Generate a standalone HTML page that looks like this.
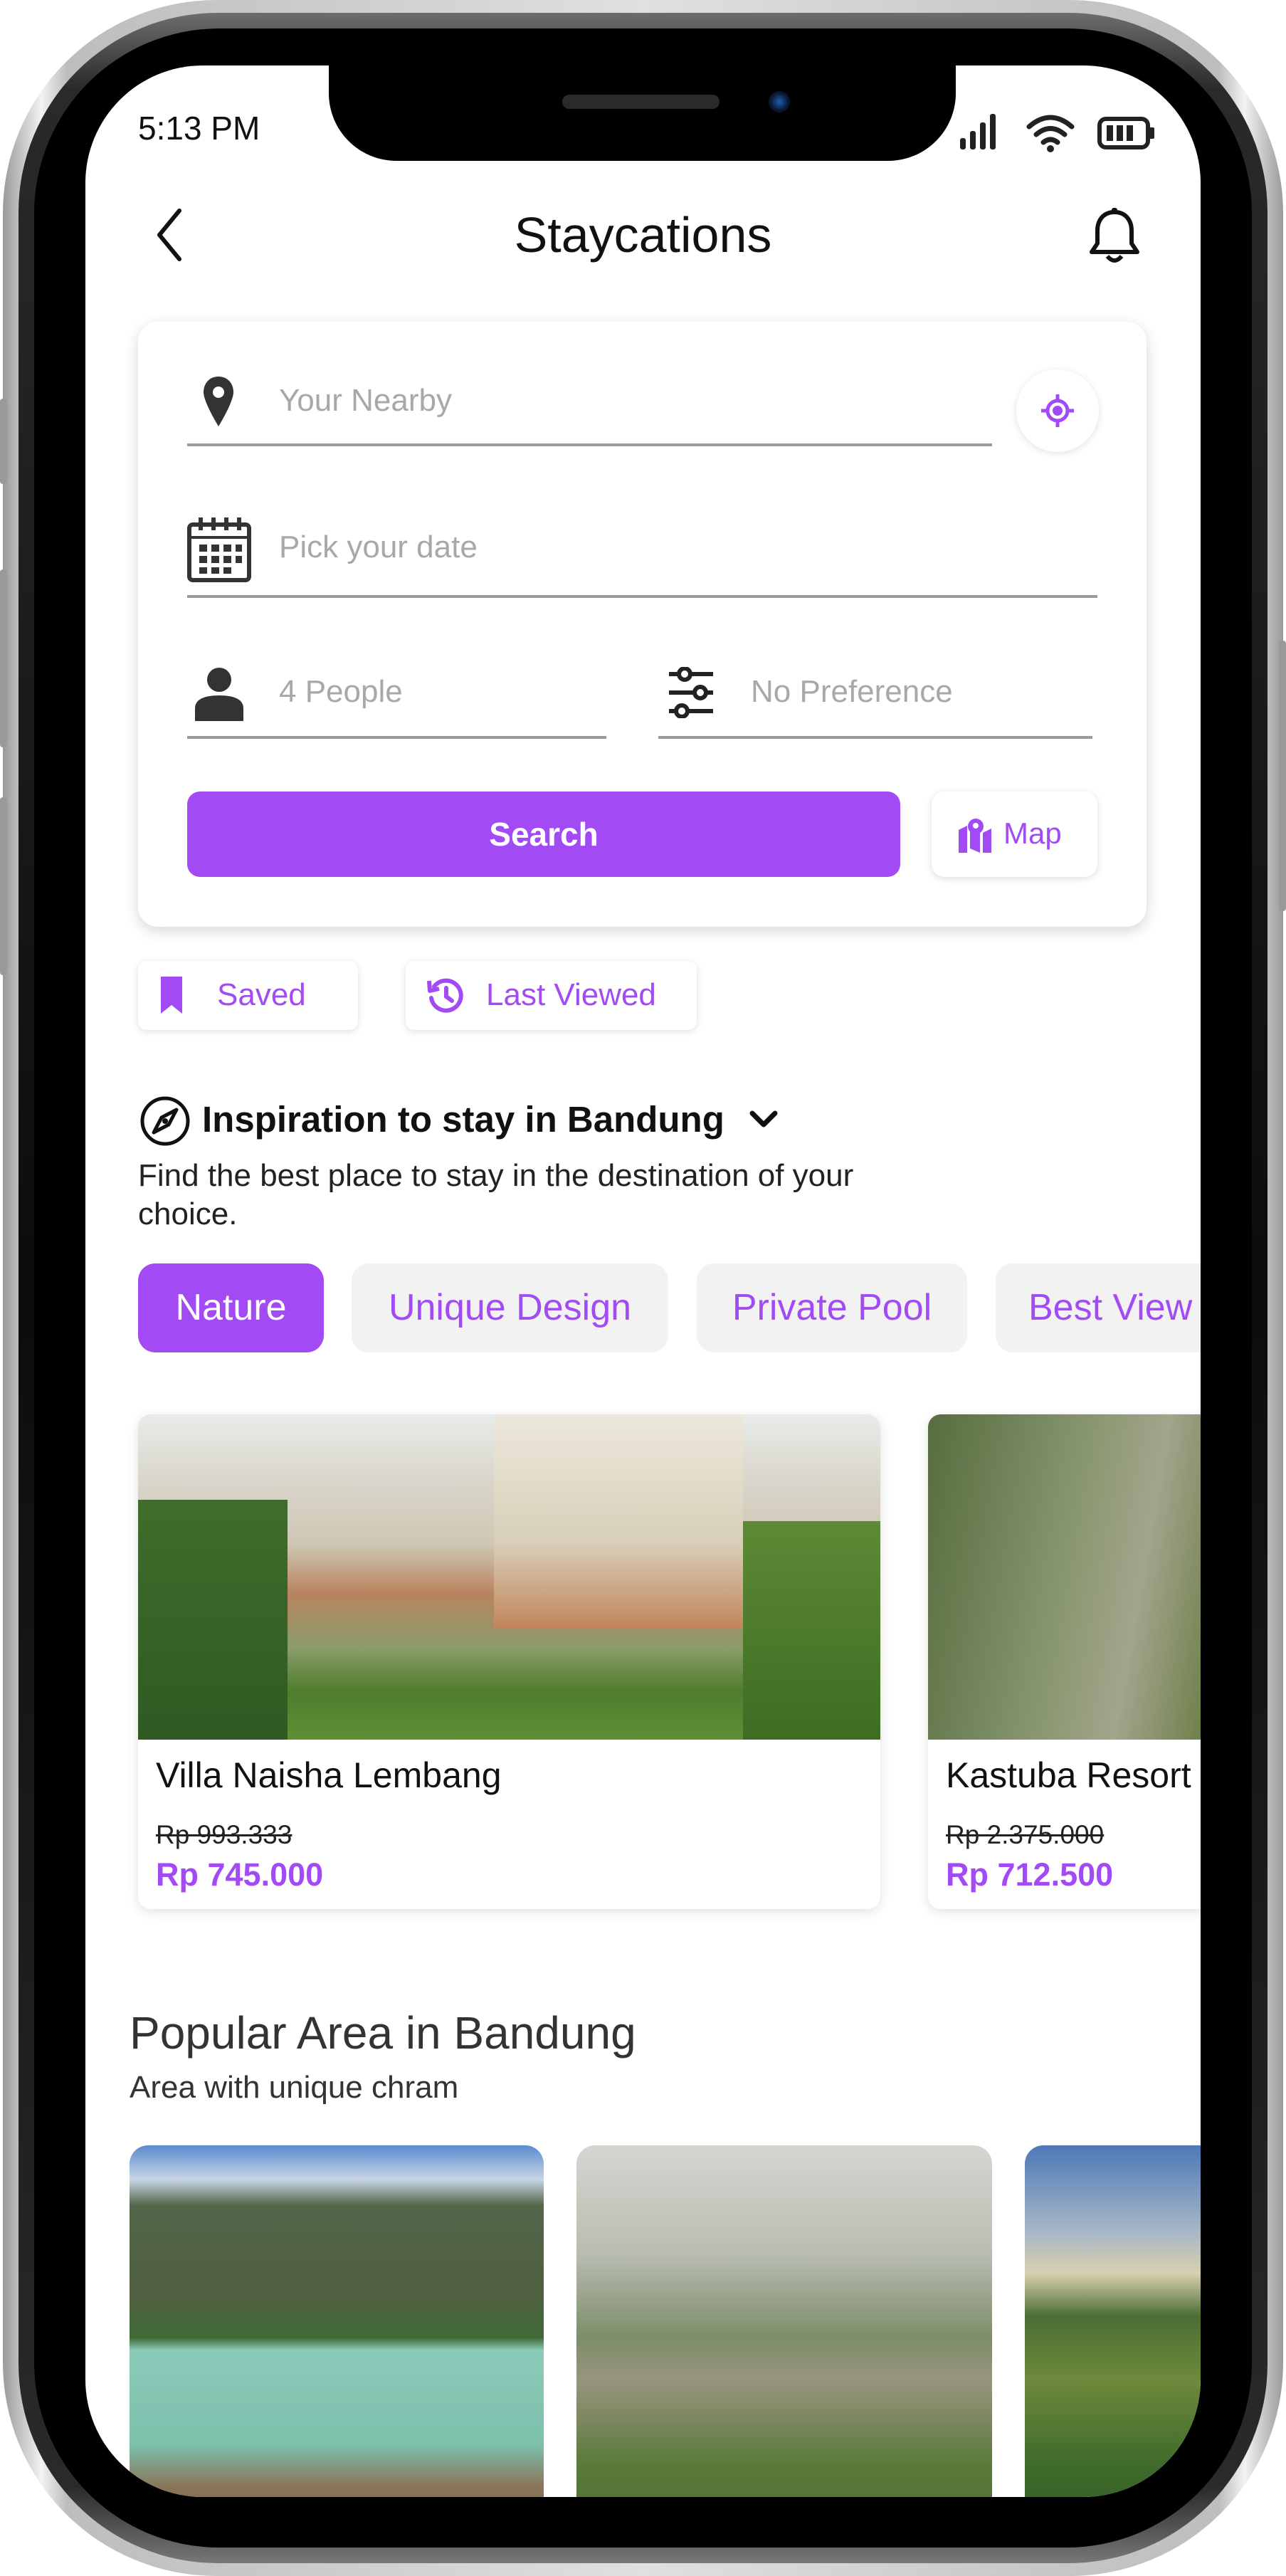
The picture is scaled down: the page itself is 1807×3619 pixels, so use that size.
<!DOCTYPE html>
<html><head><meta charset="utf-8"><style>
*{margin:0;padding:0;box-sizing:border-box}
body{width:1807px;height:3619px;overflow:hidden;background:#fff;font-family:"Liberation Sans",sans-serif;position:relative}
.a{position:absolute}
.t{position:absolute;white-space:nowrap}
.ph{color:#a8a8a8;font-size:44px;line-height:60px}
.line{position:absolute;height:4px;background:#9a9a9a}
.tab{position:absolute;top:1775px;height:125px;border-radius:24px;background:#f2f2f2;color:#a24bf4;font-size:52px;line-height:125px;text-align:center}
</style></head><body>
<div class="a" style="left:4px;top:0;width:1799px;height:3619px;border-radius:300px;background:linear-gradient(90deg,#9a9a9a,#f2f2f2 3%,#bdbdbd 5%,#e0e0e0 50%,#bdbdbd 95%,#f2f2f2 97%,#9a9a9a)"></div>
<div class="a" style="left:26px;top:18px;width:1755px;height:3583px;border-radius:280px;background:linear-gradient(180deg,#6d6d6d,#2a2a2a 3%,#0c0c0c 50%,#2a2a2a 97%,#777)"></div>
<div class="a" style="left:48px;top:40px;width:1711px;height:3539px;border-radius:260px;background:#000"></div>
<div class="a" style="left:0;top:560px;width:10px;height:120px;background:#999;border-radius:4px"></div>
<div class="a" style="left:0;top:800px;width:10px;height:250px;background:#999;border-radius:4px"></div>
<div class="a" style="left:0;top:1120px;width:10px;height:250px;background:#999;border-radius:4px"></div>
<div class="a" style="right:0;top:900px;width:10px;height:380px;background:#999;border-radius:4px"></div>
<div class="a" style="left:120px;top:92px;width:1567px;height:3416px;border-radius:165px;background:#fff;overflow:hidden">
 <div class="a" style="left:-120px;top:-92px;width:1807px;height:3619px">
  <div class="a" style="left:462px;top:60px;width:881px;height:166px;background:#000;border-radius:0 0 95px 95px"></div>
  <div class="a" style="left:790px;top:133px;width:221px;height:20px;border-radius:10px;background:#2a2a2a"></div>
  <div class="a" style="left:1080px;top:128px;width:30px;height:30px;border-radius:50%;background:radial-gradient(#1e5fb0,#0a1530 60%,#111)"></div>
  <div class="t" style="left:194px;top:153px;font-size:46px;line-height:54px;color:#111">5:13 PM</div>
  <svg class="a" style="left:1345px;top:158px" width="60" height="54" viewBox="0 0 60 54"><g fill="#222"><rect x="4" y="36" width="8" height="16" rx="3"/><rect x="18" y="26" width="8" height="26" rx="3"/><rect x="32" y="14" width="8" height="38" rx="3"/><rect x="46" y="2" width="8" height="50" rx="3"/></g></svg>
  <svg class="a" style="left:1440px;top:158px" width="72" height="56" viewBox="0 0 72 56"><g fill="none" stroke="#222" stroke-width="7" stroke-linecap="round"><path d="M6 20 Q36 -6 66 20"/><path d="M16 31 Q36 14 56 31"/><path d="M26 42 Q36 34 46 42"/></g><circle cx="36" cy="51" r="5" fill="#222"/></svg>
  <svg class="a" style="left:1542px;top:164px" width="82" height="46" viewBox="0 0 82 46"><rect x="3" y="3" width="68" height="40" rx="9" fill="none" stroke="#222" stroke-width="6"/><rect x="73" y="15" width="7" height="16" rx="2" fill="#222"/><g fill="#222"><rect x="13" y="12" width="9" height="22"/><rect x="27" y="12" width="9" height="22"/><rect x="41" y="12" width="9" height="22"/></g></svg>
  <svg class="a" style="left:214px;top:290px" width="50" height="80" viewBox="0 0 50 80"><path d="M38 6 L10 40 L38 74" fill="none" stroke="#111" stroke-width="6" stroke-linecap="round" stroke-linejoin="round"/></svg>
  <div class="t" style="left:0;width:1807px;text-align:center;top:290px;font-size:70px;line-height:80px;color:#111">Staycations</div>
  <svg class="a" style="left:1528px;top:290px" width="76" height="84" viewBox="0 0 76 84"><path d="M38 8 C22 8 14 20 14 34 L14 52 L6 64 L70 64 L62 52 L62 34 C62 20 54 8 38 8 Z" fill="none" stroke="#111" stroke-width="6" stroke-linejoin="round"/><path d="M28 70 Q38 82 48 70" fill="none" stroke="#111" stroke-width="6"/><rect x="34" y="2" width="8" height="8" rx="3" fill="#111"/></svg>
  <div class="a" style="left:194px;top:452px;width:1417px;height:850px;border-radius:28px;background:#fff;box-shadow:0 6px 20px rgba(0,0,0,.16)"></div>
  <svg class="a" style="left:283px;top:527px" width="48" height="74" viewBox="0 0 48 74"><path d="M24 2 C11 2 3 12 3 24 C3 38 24 72 24 72 C24 72 45 38 45 24 C45 12 37 2 24 2 Z" fill="#333"/><circle cx="24" cy="24" r="8" fill="#fff"/></svg>
  <div class="t ph" style="left:392px;top:533px">Your Nearby</div>
  <div class="line" style="left:263px;top:623px;width:1131px"></div>
  <div class="a" style="left:1428px;top:519px;width:116px;height:116px;border-radius:50%;background:#fff;box-shadow:0 2px 10px rgba(0,0,0,.12)"></div>
  <svg class="a" style="left:1461px;top:552px" width="50" height="50" viewBox="0 0 50 50"><circle cx="25" cy="25" r="14" fill="none" stroke="#a24bf4" stroke-width="5"/><circle cx="25" cy="25" r="7" fill="#a24bf4"/><g stroke="#a24bf4" stroke-width="5"><path d="M25 2V11M25 39V48M2 25H11M39 25H48"/></g></svg>
  <svg class="a" style="left:262px;top:725px" width="92" height="94" viewBox="0 0 92 94"><rect x="4" y="12" width="84" height="78" rx="5" fill="none" stroke="#333" stroke-width="6"/><path d="M4 30H88" stroke="#333" stroke-width="4"/><g stroke="#333" stroke-width="6"><path d="M20 2V20M38 2V20M56 2V20M74 2V20"/></g><g fill="#333"><rect x="18" y="40" width="11" height="10"/><rect x="35" y="40" width="11" height="10"/><rect x="52" y="40" width="11" height="10"/><rect x="69" y="40" width="9" height="10"/><rect x="18" y="56" width="11" height="10"/><rect x="35" y="56" width="11" height="10"/><rect x="52" y="56" width="11" height="10"/><rect x="69" y="56" width="9" height="10"/><rect x="18" y="72" width="11" height="9"/><rect x="35" y="72" width="11" height="9"/><rect x="52" y="72" width="11" height="9"/></g></svg>
  <div class="t ph" style="left:392px;top:739px">Pick your date</div>
  <div class="line" style="left:263px;top:836px;width:1279px"></div>
  <svg class="a" style="left:272px;top:937px" width="72" height="76" viewBox="0 0 72 76"><circle cx="36" cy="18" r="17" fill="#333"/><path d="M2 76 L2 58 C2 46 14 40 36 40 C58 40 70 46 70 58 L70 76 Z" fill="#333"/></svg>
  <div class="t ph" style="left:392px;top:942px">4 People</div>
  <div class="line" style="left:263px;top:1034px;width:589px"></div>
  <svg class="a" style="left:938px;top:937px" width="66" height="72" viewBox="0 0 66 72"><g stroke="#222" stroke-width="6" fill="#fff"><path d="M2 10H64M2 36H64M2 62H64"/><circle cx="24" cy="10" r="8"/><circle cx="46" cy="36" r="8"/><circle cx="20" cy="62" r="8"/></g></svg>
  <div class="t ph" style="left:1055px;top:942px">No Preference</div>
  <div class="line" style="left:925px;top:1034px;width:610px"></div>
  <div class="a" style="left:263px;top:1112px;width:1002px;height:120px;border-radius:18px;background:#a24bf4;color:#fff;font-size:46px;font-weight:bold;line-height:120px;text-align:center">Search</div>
  <div class="a" style="left:1309px;top:1112px;width:233px;height:120px;border-radius:18px;background:#fff;box-shadow:0 2px 10px rgba(0,0,0,.14)"></div>
  <svg class="a" style="left:1345px;top:1148px" width="50" height="52" viewBox="0 0 50 52"><path d="M2 18 L14 12 L14 50 L2 50 Z M18 14 L32 22 L32 50 L18 44 Z M36 22 L48 16 L48 50 L36 50 Z" fill="#a24bf4"/><circle cx="26" cy="13" r="11" fill="#a24bf4"/><circle cx="26" cy="12" r="4" fill="#fff"/></svg>
  <div class="t" style="left:1410px;top:1143px;font-size:42px;line-height:56px;color:#a24bf4">Map</div>
  <div class="a" style="left:194px;top:1350px;width:309px;height:97px;border-radius:12px;background:#fff;box-shadow:0 2px 10px rgba(0,0,0,.13)"></div>
  <svg class="a" style="left:224px;top:1370px" width="34" height="56" viewBox="0 0 34 56"><path d="M2 2H32V54L17 42L2 54Z" fill="#a24bf4"/></svg>
  <div class="t" style="left:305px;top:1370px;font-size:44px;line-height:56px;color:#a24bf4">Saved</div>
  <div class="a" style="left:570px;top:1350px;width:409px;height:97px;border-radius:12px;background:#fff;box-shadow:0 2px 10px rgba(0,0,0,.13)"></div>
  <svg class="a" style="left:600px;top:1372px" width="54" height="54" viewBox="0 0 54 54"><path d="M10 14 A21 21 0 1 1 6 30" fill="none" stroke="#a24bf4" stroke-width="6" stroke-linecap="round"/><path d="M3 6 L4 20 L17 17" fill="none" stroke="#a24bf4" stroke-width="6" stroke-linejoin="round"/><path d="M27 16V28L35 34" fill="none" stroke="#a24bf4" stroke-width="6" stroke-linecap="round"/></svg>
  <div class="t" style="left:683px;top:1370px;font-size:44px;line-height:56px;color:#a24bf4">Last Viewed</div>
  <svg class="a" style="left:196px;top:1539px" width="72" height="72" viewBox="0 0 72 72"><circle cx="36" cy="36" r="32" fill="none" stroke="#111" stroke-width="5"/><path d="M52 20 L41 41 L20 52 L31 31 Z" fill="none" stroke="#111" stroke-width="5" stroke-linejoin="round"/><circle cx="36" cy="36" r="4" fill="#111"/></svg>
  <div class="t" style="left:284px;top:1541px;font-size:51px;line-height:64px;color:#111;font-weight:bold">Inspiration to stay in Bandung</div>
  <svg class="a" style="left:1052px;top:1558px" width="42" height="30" viewBox="0 0 42 30"><path d="M5 6 L21 22 L37 6" fill="none" stroke="#111" stroke-width="7" stroke-linecap="round" stroke-linejoin="round"/></svg>
  <div class="a" style="left:194px;top:1625px;font-size:44px;line-height:54px;color:#222;width:1120px">Find the best place to stay in the destination of your choice.</div>
  <div class="tab" style="left:194px;width:261px;background:#a24bf4;color:#fff">Nature</div>
  <div class="tab" style="left:494px;width:445px">Unique Design</div>
  <div class="tab" style="left:979px;width:380px">Private Pool</div>
  <div class="tab" style="left:1399px;width:330px;text-align:left;padding-left:46px">Best View</div>
  <div class="a" style="left:194px;top:1987px;width:1043px;height:695px;border-radius:18px;background:#fff;box-shadow:0 4px 16px rgba(0,0,0,.12);overflow:hidden">
   <div class="a" style="left:0;top:0;width:1043px;height:457px;background:linear-gradient(180deg,#e8ece8 0%,#d9d6cc 20%,#cfc7b4 40%,#b8845e 55%,#8a9c6a 72%,#4f7d2e 85%,#5e8f34 100%)"></div>
   <div class="a" style="left:0;top:120px;width:210px;height:337px;background:linear-gradient(180deg,#3f6d2b,#2f5a22)"></div>
   <div class="a" style="left:500px;top:0;width:350px;height:300px;background:linear-gradient(180deg,#ece8dc,#d8cfb8 60%,#c2865a)"></div>
   <div class="a" style="left:850px;top:150px;width:193px;height:307px;background:linear-gradient(180deg,#5d8a36,#3e6c22)"></div>
   <div class="t" style="left:25px;top:477px;font-size:50px;line-height:60px;color:#111">Villa Naisha Lembang</div>
   <div class="t" style="left:25px;top:569px;font-size:37px;line-height:44px;color:#222;text-decoration:line-through">Rp 993.333</div>
   <div class="t" style="left:25px;top:620px;font-size:45px;line-height:54px;color:#a24bf4;font-weight:bold">Rp 745.000</div>
  </div>
  <div class="a" style="left:1304px;top:1987px;width:600px;height:695px;border-radius:18px;background:#fff;box-shadow:0 4px 16px rgba(0,0,0,.12);overflow:hidden">
   <div class="a" style="left:0;top:0;width:600px;height:457px;background:linear-gradient(100deg,#566d3f,#8a9870 35%,#a3a48c 50%,#6a7d45 70%,#3c5a25)"></div>
   <div class="t" style="left:25px;top:477px;font-size:50px;line-height:60px;color:#111">Kastuba Resort</div>
   <div class="t" style="left:25px;top:569px;font-size:37px;line-height:44px;color:#222;text-decoration:line-through">Rp 2.375.000</div>
   <div class="t" style="left:25px;top:620px;font-size:45px;line-height:54px;color:#a24bf4;font-weight:bold">Rp 712.500</div>
  </div>
  <div class="t" style="left:182px;top:2818px;font-size:64px;line-height:76px;color:#333">Popular Area in Bandung</div>
  <div class="t" style="left:182px;top:2906px;font-size:44px;line-height:54px;color:#333">Area with unique chram</div>
  <div class="a" style="left:182px;top:3014px;width:582px;height:600px;border-radius:26px;overflow:hidden;background:linear-gradient(180deg,#5a8ad0 0%,#c8d6e6 8%,#54664a 14%,#4f5f40 35%,#3f6a36 45%,#8ccab8 48%,#7cc0ac 70%,#8a7458 80%,#7a6450 100%)"></div>
  <div class="a" style="left:810px;top:3014px;width:584px;height:600px;border-radius:26px;overflow:hidden;background:linear-gradient(180deg,#d4d6d0 0%,#b9bdb2 25%,#7e8d6a 45%,#98947e 55%,#5a7a3a 75%,#4b6a30 100%)"></div>
  <div class="a" style="left:1440px;top:3014px;width:400px;height:600px;border-radius:26px;overflow:hidden;background:linear-gradient(180deg,#4e78b8 0%,#a6b6c6 20%,#d8d0b0 30%,#4c6e34 40%,#6e8a3c 55%,#3e6a2a 75%,#2e5420 100%)"></div>
 </div>
</div>
</body></html>
